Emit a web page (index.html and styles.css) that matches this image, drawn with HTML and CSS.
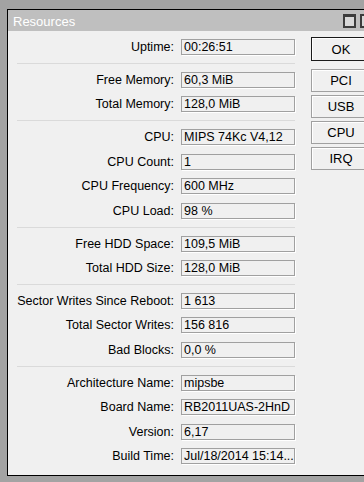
FILE: index.html
```html
<!DOCTYPE html>
<html lang="en">
<head>
  <meta charset="UTF-8" />
  <meta name="viewport" content="width=device-width, initial-scale=1.0" />
  <title>Resources</title>
  <link rel="stylesheet" href="styles.css">
</head>
<body>
  <div class="window">
    <!-- Title Bar -->
    <div class="title-bar">
      <span class="title">Resources</span>
      <span class="win-btn max"></span>
      <span class="win-btn cut"></span>
    </div>

    <div class="content">
      <!-- Info Fields -->
      <div class="info">
        <div class="group">
          <div class="row"><label>Uptime:</label><div class="field">00:26:51</div></div>
        </div>
        <div class="group">
          <div class="row"><label>Free Memory:</label><div class="field">60,3 MiB</div></div>
          <div class="row"><label>Total Memory:</label><div class="field">128,0 MiB</div></div>
        </div>
        <div class="group">
          <div class="row"><label>CPU:</label><div class="field">MIPS 74Kc V4,12</div></div>
          <div class="row"><label>CPU Count:</label><div class="field">1</div></div>
          <div class="row"><label>CPU Frequency:</label><div class="field">600 MHz</div></div>
          <div class="row"><label>CPU Load:</label><div class="field">98 %</div></div>
        </div>
        <div class="group">
          <div class="row"><label>Free HDD Space:</label><div class="field">109,5 MiB</div></div>
          <div class="row"><label>Total HDD Size:</label><div class="field">128,0 MiB</div></div>
        </div>
        <div class="group">
          <div class="row"><label>Sector Writes Since Reboot:</label><div class="field">1 613</div></div>
          <div class="row"><label>Total Sector Writes:</label><div class="field">156 816</div></div>
          <div class="row"><label>Bad Blocks:</label><div class="field">0,0 %</div></div>
        </div>
        <div class="group">
          <div class="row"><label>Architecture Name:</label><div class="field">mipsbe</div></div>
          <div class="row"><label>Board Name:</label><div class="field">RB2011UAS-2HnD</div></div>
          <div class="row"><label>Version:</label><div class="field">6,17</div></div>
          <div class="row"><label>Build Time:</label><div class="field">Jul/18/2014 15:14...</div></div>
        </div>
      </div>

      <!-- Side Buttons -->
      <div class="buttons">
        <button class="btn default">OK</button>
        <div class="btn-list">
          <button class="btn">PCI</button>
          <button class="btn">USB</button>
          <button class="btn">CPU</button>
          <button class="btn">IRQ</button>
        </div>
      </div>
    </div>
  </div>
</body>
</html>
```

FILE: styles.css
```css
/* Reset */
* {
  margin: 0;
  padding: 0;
  box-sizing: border-box;
}
body {
  background-color: #a3a3a3;
  font-family: "Liberation Sans", Arial, sans-serif;
  font-size: 12.5px;
  color: #000;
  overflow: hidden;
  height: 482px;
}

/* Window */
.window {
  margin: 9px 0 0 7px;
  width: 357px;
  height: 467px;
  border: 1px solid #000;
  border-right: none;
  background-color: #f0f0f0;
  overflow: hidden;
}

/* Title Bar */
.title-bar {
  height: 21px;
  background-color: #bfbfbf;
  display: flex;
  align-items: center;
  padding-left: 5px;
}
.title {
  color: #fff;
  font-size: 13px;
  width: 330px;
  padding-top: 1px;
}
.win-btn {
  width: 13px;
  height: 14px;
  border: 2px solid #3c3c3c;
  background-color: #d8d8d8;
  margin-right: 4px;
}
.win-btn.max {
  border-top-width: 3px;
}
.win-btn.cut {
  width: 4px;
  margin-right: 0;
  border-right: none;
}

/* Content */
.content {
  display: flex;
  padding: 8px 0 0 9px;
}
.info {
  width: 278px;
}
.group {
  display: flex;
  flex-direction: column;
  gap: 8.4px;
  padding: 8px 0;
  border-top: 1px solid #dadada;
}
.group:first-child {
  border-top: none;
  padding-top: 0;
}
.row {
  display: flex;
  align-items: center;
  height: 16px;
}
.row label {
  width: 157px;
  text-align: right;
  margin-right: 7px;
  white-space: nowrap;
}
.field {
  width: 114px;
  height: 16px;
  border: 1px solid #a0a0a0;
  box-shadow: 1px 1px 0 #fff;
  padding-left: 2px;
  line-height: 14px;
  white-space: nowrap;
  overflow: hidden;
}

/* Buttons */
.buttons {
  margin-left: 16px;
  margin-top: -2px;
}
.btn {
  display: block;
  width: 53px;
  height: 23px;
  padding-left: 6px;
  background-color: #f0f0f0;
  border: 1px solid #a0a0a0;
  border-right: none;
  box-shadow: inset 1px 1px 0 #fff;
  font-family: "Liberation Sans", Arial, sans-serif;
  font-size: 13px;
  color: #000;
}
.btn.default {
  border-color: #1a1a1a;
  height: 24px;
}
.btn-list {
  display: flex;
  flex-direction: column;
  gap: 3px;
  margin-top: 8px;
}
```
